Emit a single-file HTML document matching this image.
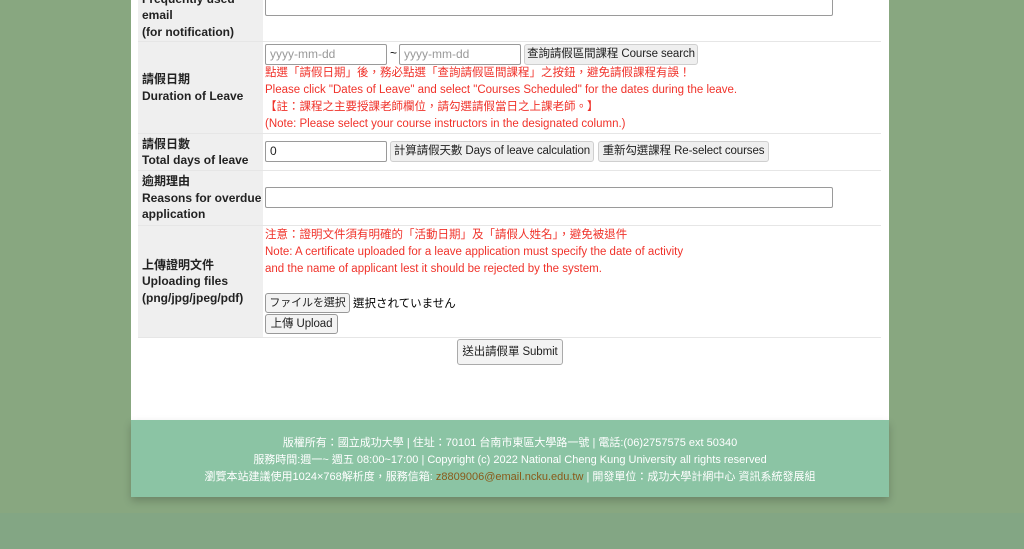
<!DOCTYPE html>
<html><head><meta charset="utf-8"><style>
*{box-sizing:border-box;margin:0;padding:0}
body{width:1024px;height:549px;overflow:hidden;position:relative;background:#88a780;font-family:"Liberation Sans","Noto Sans CJK TC",sans-serif;}
.band{position:absolute;left:0;top:513px;width:1024px;height:36px;background:#83a684}
.wrap{position:absolute;left:131px;top:0;width:758px;height:420px;background:#fff}
.a{position:absolute}
.lab{position:absolute;left:138px;width:125px;background:#efefef;font-size:12px;font-weight:bold;color:#222;line-height:16.5px;padding-left:4px;display:flex;flex-direction:column;justify-content:center;white-space:nowrap}
.line{position:absolute;left:138px;width:743px;height:1px;background:#e6e6e6}
.in{position:absolute;border:1px solid #9a9a9a;border-radius:2px;background:#fff;font-size:12px;color:#222;padding-left:4px;line-height:18px}
.btn{position:absolute;background:#efefef;border:1px solid #cfcfcf;border-radius:3px;font-size:11.5px;color:#222;line-height:18px;text-align:center;white-space:nowrap;letter-spacing:-0.1px}
.red{position:absolute;color:#f0322a;font-size:11.5px;line-height:17px;white-space:nowrap}
.foot{position:absolute;left:131px;top:420px;width:758px;height:77px;background:#8bc4a4;color:#fff;font-size:11px;text-align:center;line-height:17px;padding-top:15px;box-shadow:0 4px 8px rgba(0,0,0,.2)}
</style></head><body>
<div class="band"></div>
<div class="wrap"></div>
<div class="lab" style="top:-10px;height:51px">Frequently used<br>email<br>(for notification)</div>
<div class="line" style="top:41px"></div>
<div class="in" style="left:265px;top:-6px;width:568px;height:22px"></div>
<div class="lab" style="top:42px;height:91px">請假日期<br>Duration of Leave</div>
<div class="in" style="left:265px;top:44px;width:122px;height:21px;color:#999">yyyy-mm-dd</div>
<div class="a" style="left:390px;top:46px;font-size:12px">~</div>
<div class="in" style="left:399px;top:44px;width:122px;height:21px;color:#999">yyyy-mm-dd</div>
<div class="btn" style="left:524px;top:44px;width:174px;height:21px">查詢請假區間課程 Course search</div>
<div class="red" style="left:265px;top:65px">點選「請假日期」後，務必點選「查詢請假區間課程」之按鈕，避免請假課程有誤！<br>Please click "Dates of Leave" and select "Courses Scheduled" for the dates during the leave.<br>【註：課程之主要授課老師欄位，請勾選請假當日之上課老師。】<br>(Note: Please select your course instructors in the designated column.)</div>
<div class="line" style="top:133px"></div>
<div class="lab" style="top:134px;height:36px">請假日數<br>Total days of leave</div>
<div class="in" style="left:265px;top:141px;width:122px;height:21px">0</div>
<div class="btn" style="left:390px;top:141px;width:204px;height:21px">計算請假天數 Days of leave calculation</div>
<div class="btn" style="left:598px;top:141px;width:171px;height:21px">重新勾選課程 Re-select courses</div>
<div class="line" style="top:170px"></div>
<div class="lab" style="top:171px;height:54px">逾期理由<br>Reasons for overdue<br>application</div>
<div class="in" style="left:265px;top:187px;width:568px;height:21px"></div>
<div class="line" style="top:225px"></div>
<div class="lab" style="top:226px;height:111px">上傳證明文件<br>Uploading files<br>(png/jpg/jpeg/pdf)</div>
<div class="red" style="left:265px;top:227px">注意：證明文件須有明確的「活動日期」及「請假人姓名」，避免被退件<br>Note: A certificate uploaded for a leave application must specify the date of activity<br>and the name of applicant lest it should be rejected by the system.</div>
<div class="btn" style="left:265px;top:293px;width:85px;height:20px;background:#f3f3f3;border-color:#999;font-size:11px">ファイルを選択</div>
<div class="a" style="left:353px;top:295px;font-size:11.5px">選択されていません</div>
<div class="btn" style="left:265px;top:314px;width:73px;height:20px;background:#f3f3f3;border-color:#999">上傳 Upload</div>
<div class="line" style="top:337px"></div>
<div class="btn" style="left:457px;top:339px;width:106px;height:26px;line-height:24px;background:#f3f3f3;border-color:#aaa">送出請假單 Submit</div>
<div class="foot">版權所有：國立成功大學 | 住址：70101 台南市東區大學路一號 | 電話:(06)2757575 ext 50340<br>服務時間:週一~ 週五 08:00~17:00 | Copyright (c) 2022 National Cheng Kung University all rights reserved<br>瀏覽本站建議使用1024×768解析度，服務信箱: <span style="color:#8a5a1a">z8809006@email.ncku.edu.tw</span> | 開發單位：成功大學計網中心 資訊系統發展組</div>
</body></html>
